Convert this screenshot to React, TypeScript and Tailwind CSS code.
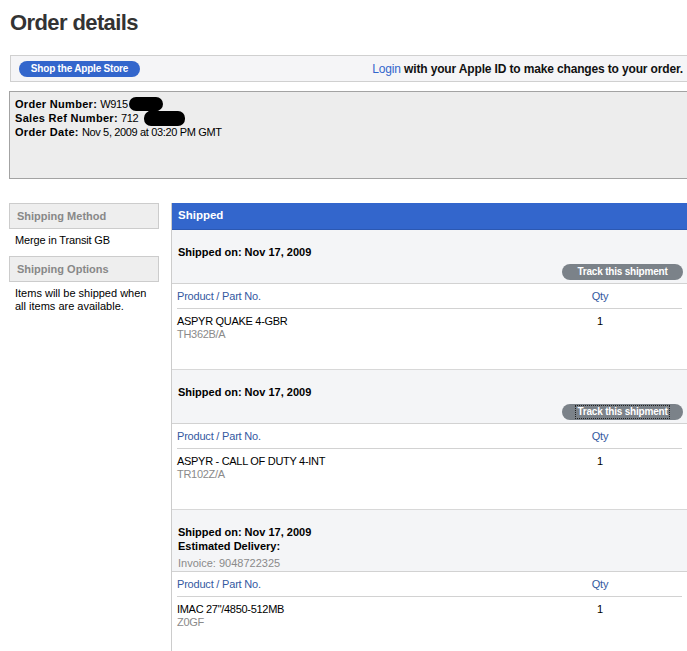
import React from "react";

type Shipment = {
  shippedOn: string;
  estimated?: boolean;
  invoice?: string;
  track?: boolean;
  focused?: boolean;
  name: string;
  part: string;
  qty: string;
};

const shipments: Shipment[] = [
  { shippedOn: "Nov 17, 2009", track: true, name: "ASPYR QUAKE 4-GBR", part: "TH362B/A", qty: "1" },
  { shippedOn: "Nov 17, 2009", track: true, focused: true, name: "ASPYR - CALL OF DUTY 4-INT", part: "TR102Z/A", qty: "1" },
  { shippedOn: "Nov 17, 2009", estimated: true, invoice: "9048722325", name: "IMAC 27\"/4850-512MB", part: "Z0GF", qty: "1" },
];

function TrackButton({ focused }: { focused?: boolean }) {
  return (
    <div className="flex justify-end pr-[4px] mt-[5px]">
      <button className="h-[16px] w-[121px] rounded-full bg-[#7b8289] text-white text-[10px] font-bold leading-[16px] tracking-[-0.2px] flex items-center justify-center">
        <span className={focused ? "outline-dotted outline-1 outline-[#222] leading-[12px] px-[1px]" : "leading-[12px]"}>
          Track this shipment
        </span>
      </button>
    </div>
  );
}

function ShipmentBlock({ s, first }: { s: Shipment; first: boolean }) {
  return (
    <div>
      <div className={`bg-[#f4f5f7] border-b border-[#d2d2d2] ${first ? "" : "border-t border-t-[#d8d8d8]"} pt-[15px] ${s.track ? "pb-[3px]" : "pb-[1px]"}`}>
        <div className="pl-[6px] text-[11px] font-bold leading-[14px]">Shipped on: {s.shippedOn}</div>
        {s.estimated && <div className="pl-[6px] text-[11px] font-bold leading-[14px]">Estimated Delivery:</div>}
        {s.invoice && <div className="pl-[6px] mt-[3px] text-[11px] leading-[14px] text-[#8a8a8a]">Invoice: {s.invoice}</div>}
        {s.track && <TrackButton focused={s.focused} />}
      </div>
      <div className="ml-[5px] mr-[5px]">
        <div className="h-[25px] flex items-center border-b border-[#d2d2d2] text-[11px] text-[#34599f] tracking-[-0.2px]">
          <div className="flex-1">Product / Part No.</div>
          <div className="w-[60px] text-center">Qty</div>
          <div className="w-[52px]" />
        </div>
        <div className="h-[60px] pt-[6px] flex text-[11px] leading-[13px]">
          <div className="flex-1 tracking-[-0.3px]">
            <div className="text-black">{s.name}</div>
            <div className="text-[#8a8a8a]">{s.part}</div>
          </div>
          <div className="w-[60px] text-center">{s.qty}</div>
          <div className="w-[52px]" />
        </div>
      </div>
    </div>
  );
}

export default function App() {
  return (
    <div className="w-[687px] h-[651px] overflow-hidden bg-white text-black font-['Liberation_Sans',Arial,sans-serif]">
      <div className="pl-[9px] pt-[10px]">
        <h1 className="ml-[1px] text-[22px] font-bold leading-[26px] tracking-[-0.6px] text-[#333333]">Order details</h1>

        {/* store / login bar */}
        <div className="ml-[1px] mt-[19px] h-[27px] border border-r-0 border-[#d0d0d0] bg-[#f5f5f7] flex items-center justify-between pl-[8px] pr-[4px]">
          <button className="h-[16px] w-[121px] rounded-full bg-[#3366cc] text-white text-[10px] font-bold leading-[16px] tracking-[-0.2px]">
            Shop the Apple Store
          </button>
          <div className="text-[12px] leading-[14px] tracking-[-0.15px]">
            <span className="text-[#3366cc]">Login</span>{" "}
            <span className="font-bold text-[#111]">with your Apple ID to make changes to your order.</span>
          </div>
        </div>

        {/* order summary */}
        <div className="relative mt-[9px] h-[88px] border border-r-0 border-[#a3a3a3] bg-[#ededed] pt-[5px] pl-[5px] text-[11px] leading-[14px]">
          <div><span className="font-bold tracking-[0.3px]">Order Number:</span> <span className="tracking-[-0.3px]">W915</span></div>
          <div><span className="font-bold tracking-[0.3px]">Sales Ref Number:</span> <span className="tracking-[-0.3px]">712</span></div>
          <div><span className="font-bold tracking-[0.3px]">Order Date:</span> <span className="tracking-[-0.35px]">Nov 5, 2009 at 03:20 PM GMT</span></div>
          <span className="absolute left-[119px] top-[5px] w-[34px] h-[14px] bg-black rounded-[7px]" />
          <span className="absolute left-[134px] top-[19px] w-[41px] h-[15px] bg-black rounded-[7px]" />
          <span className="absolute left-[137px] top-[18px] w-[14px] h-[10px] bg-black rounded-[5px]" />
        </div>

        <div className="mt-[24px] flex">
          {/* side column */}
          <div className="w-[150px] shrink-0">
            <div className="h-[26px] border border-[#cccccc] bg-[#eeeeee] pl-[7px] flex items-center text-[11px] font-bold text-[#888888]">
              Shipping Method
            </div>
            <div className="mt-[4px] pl-[6px] text-[11px] leading-[14px] tracking-[-0.15px]">Merge in Transit GB</div>
            <div className="mt-[9px] h-[26px] border border-[#cccccc] bg-[#eeeeee] pl-[7px] flex items-center text-[11px] font-bold text-[#888888]">
              Shipping Options
            </div>
            <div className="mt-[5px] pl-[6px] pr-[4px] text-[11px] leading-[13px]">
              Items will be shipped when all items are available.
            </div>
          </div>

          {/* shipments */}
          <div className="ml-[12px] flex-1 border-l border-[#cccccc] min-h-[460px]">
            <div className="h-[27px] bg-[#3366cc] border-b border-[#2c58b2] pl-[6px] flex items-center text-white text-[11.5px] font-bold">
              Shipped
            </div>
            {shipments.map((s, i) => (
              <ShipmentBlock key={i} s={s} first={i === 0} />
            ))}
          </div>
        </div>
      </div>
    </div>
  );
}
